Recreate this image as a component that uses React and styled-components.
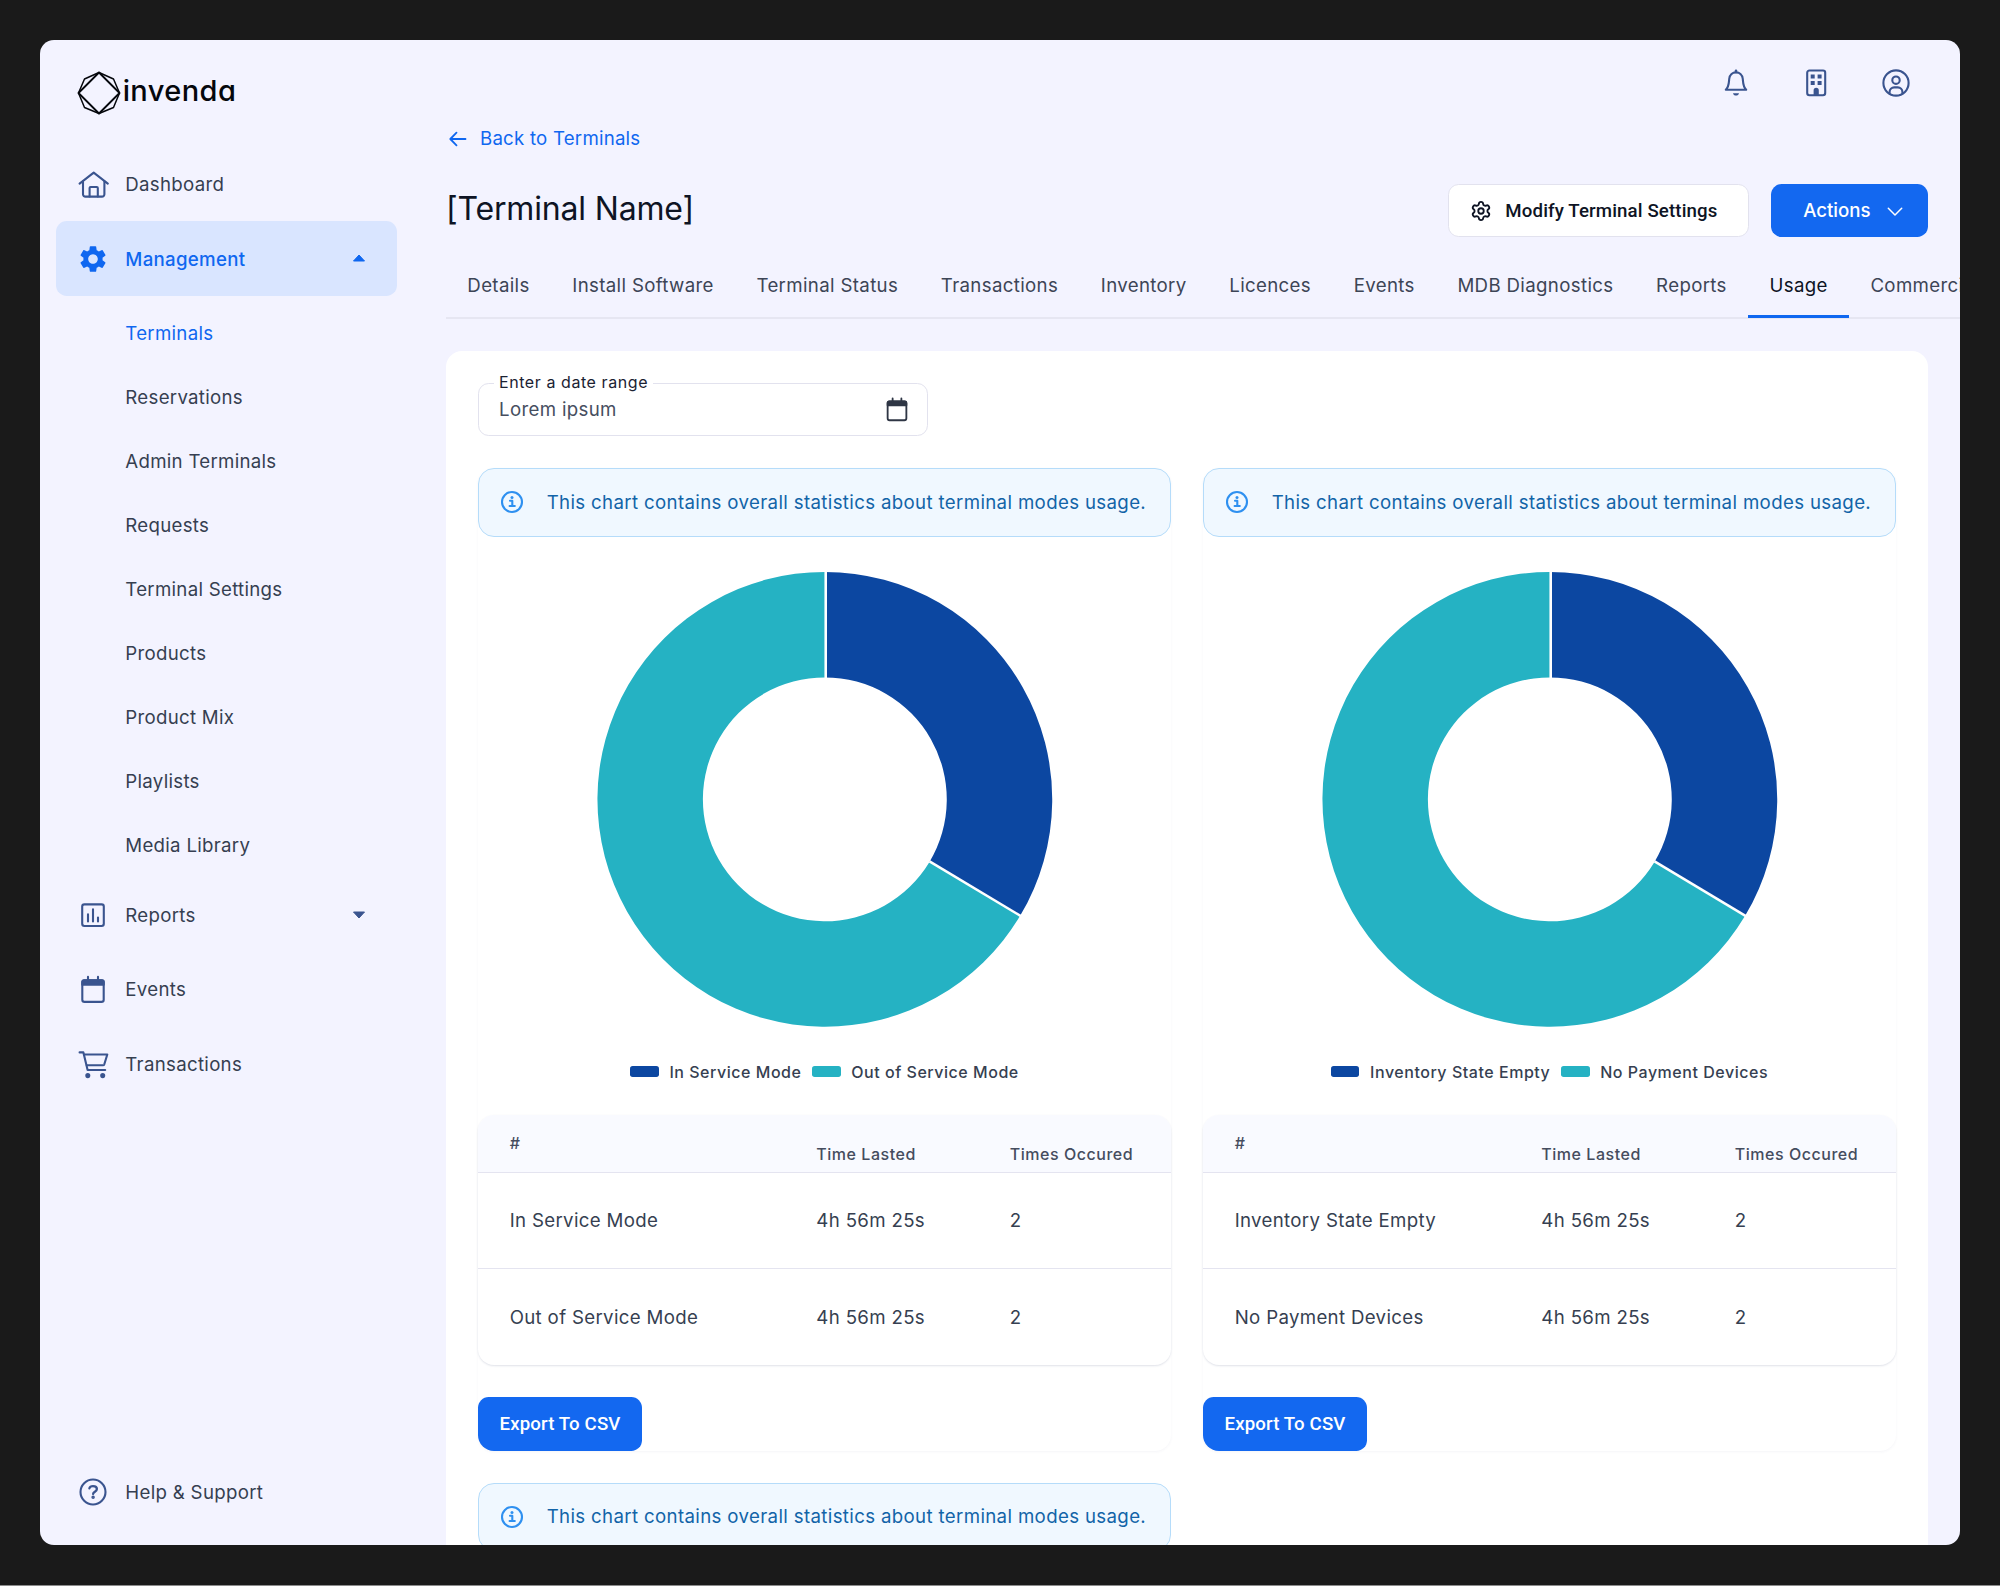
import styled, { createGlobalStyle, css } from "styled-components";
import { MdSettings } from "react-icons/md";
import { Settings } from "lucide-react";

const GlobalStyle = createGlobalStyle`
  * {
    box-sizing: border-box;
  }
  body {
    margin: 0;
    background: #1a1a1a;
    font-family: Inter, "Liberation Sans", sans-serif;
    color: #363f51;
  }
  button {
    font-family: inherit;
  }
`;

const subItems = [
  "Terminals",
  "Reservations",
  "Admin Terminals",
  "Requests",
  "Terminal Settings",
  "Products",
  "Product Mix",
  "Playlists",
  "Media Library",
];

const tabs = [
  "Details",
  "Install Software",
  "Terminal Status",
  "Transactions",
  "Inventory",
  "Licences",
  "Events",
  "MDB Diagnostics",
  "Reports",
  "Usage",
  "Commercials",
];

const charts = [
  [
    { name: "In Service Mode", time: "4h 56m 25s", count: 2, share: 0.3358, color: "#0c47a1" },
    { name: "Out of Service Mode", time: "4h 56m 25s", count: 2, share: 0.6642, color: "#25b2c3" },
  ],
  [
    { name: "Inventory State Empty", time: "4h 56m 25s", count: 2, share: 0.3358, color: "#0c47a1" },
    { name: "No Payment Devices", time: "4h 56m 25s", count: 2, share: 0.6642, color: "#25b2c3" },
  ],
];

/* Icons */

const HomeIcon = () => (
  <LineIcon viewBox="0 0 32 32">
    <path d="M2.6 15.6 16.7 4.6 30.8 15.6" />
    <path d="M6 13.4V26.2a2.4 2.4 0 0 0 2.4 2.4H25a2.4 2.4 0 0 0 2.4-2.4V13.4" />
    <path d="M12.6 28.4V20a1 1 0 0 1 1-1h6.2a1 1 0 0 1 1 1v8.4" />
  </LineIcon>
);

const ReportsIcon = () => (
  <LineIcon viewBox="0 0 32 32">
    <rect x="5.2" y="5.4" width="21.6" height="21.6" rx="2.2" />
    <path d="M11 15.4V22.4M16 10.4V22.4M21 18.6V22.4" />
  </LineIcon>
);

const CalendarIcon = ({ size, color }) => (
  <LineIcon viewBox="0 0 32 32" $size={size} $color={color}>
    <rect x="5.3" y="7.3" width="21.4" height="21.6" rx="2.2" />
    <path d="M5.3 9A1.7 1.7 0 0 1 7 7.3h18A1.7 1.7 0 0 1 26.7 9v2.8H5.3z" fill="currentColor" />
    <path d="M11 3.9V8M21 3.9V8" />
  </LineIcon>
);

const CartIcon = () => (
  <LineIcon viewBox="0 0 32 32">
    <path d="M2.6 4.4H6.4L10.6 22H28.2" />
    <path d="M7 6.5H30.3L27.3 16.3a1.6 1.6 0 0 1-1.4 1H9.8" />
    <circle cx="10.8" cy="27.6" r="1.5" fill="currentColor" />
    <circle cx="25.7" cy="27.6" r="1.5" fill="currentColor" />
  </LineIcon>
);

const HelpIcon = () => (
  <LineIcon viewBox="0 0 32 32">
    <circle cx="16" cy="16" r="12.5" />
    <path d="M12.4 12.3C12.8 10.9 14.2 10.1 16 10.1c2.3 0 3.9 1.2 3.9 3 0 2.6-3.8 2.6-3.8 4.9" strokeWidth="2.3" />
    <circle cx="16.1" cy="21.3" r="0.7" fill="currentColor" />
  </LineIcon>
);

const BellIcon = () => (
  <LineIcon viewBox="0 0 32 32">
    <path d="M5.8 22.8C9 19.8 8.800 16.5 9.2 12 9.6 7.6 12.7 5.400 16 5.400s6.4 2.2 6.8 6.6c.4 4.5.2 7.8 3.400 10.8z" />
    <path d="M16 3.8V5" strokeWidth="2.6" />
    <path d="M13 26.2h6c-.4 3.2-5.6 3.2-6 0z" fill="currentColor" stroke="none" />
  </LineIcon>
);

const BuildingIcon = () => (
  <LineIcon viewBox="0 0 32 32">
    <rect x="7.2" y="3.5" width="18" height="24.8" rx="2.2" />
    <path
      d="M10.700 7.400h4v4h-4zM17.600 7.400h4v4h-4zM10.700 14h4v4h-4zM17.600 14h4v4h-4zM13.600 28v-4.600a2.600 2.600 0 0 1 5.200 0V28z"
      fill="currentColor"
      stroke="none"
    />
  </LineIcon>
);

const UserIcon = () => (
  <LineIcon viewBox="0 0 32 32">
    <circle cx="16" cy="16" r="12.6" />
    <circle cx="16" cy="13.2" r="3.7" />
    <path d="M9.6 26.2V25a4.6 4.6 0 0 1 4.6-4.6h3.6a4.6 4.6 0 0 1 4.6 4.6v1.2" />
  </LineIcon>
);

const InfoIcon = () => (
  <LineIcon viewBox="0 0 32 32" $color="#2e90f0">
    <circle cx="16" cy="16" r="10" />
    <path d="M14 14.8h2.3v5M13.6 20h5.2" />
    <circle cx="16" cy="11.4" r="1.5" fill="currentColor" stroke="none" />
  </LineIcon>
);

const Caret = ({ up }) => (
  <CaretSvg viewBox="0 0 14 8">
    {up ? <path d="M1.5 7 7 1l5.500 6z" /> : <path d="M1.500 1 7 7l5.500-6z" />}
  </CaretSvg>
);

const Logo = () => (
  <LogoWrap>
    <LogoMark viewBox="0 0 44 44">
      <path d="M22 1.5 36.5 8 42.5 22 36.5 36.5 22 42.5 7.5 36.5 1.5 22 7.5 8z" strokeWidth="1.5" />
      <path d="M22 1.5 42.5 22 22 42.5 1.5 22z" strokeWidth="1.8" />
    </LogoMark>
    <LogoText>invenda</LogoText>
  </LogoWrap>
);

/* Donut chart */

const CX = 347;
const CY = 262.33;
const OUTER = 227.5;
const INNER = 122;

const point = (radius, turn) => {
  const angle = turn * Math.PI * 2;
  return `${CX + radius * Math.sin(angle)} ${CY - radius * Math.cos(angle)}`;
};

const slice = (from, to) => {
  const large = to - from > 0.5 ? 1 : 0;
  return `M${point(OUTER, from)}A${OUTER} ${OUTER} 0 ${large} 1 ${point(OUTER, to)}L${point(INNER, to)}A${INNER} ${INNER} 0 ${large} 0 ${point(INNER, from)}z`;
};

const Donut = ({ data }) => {
  let start = 0;
  const parts = data.map((item) => {
    const from = start;
    start += item.share;
    return { ...item, from, to: start };
  });

  return (
    <DonutSvg viewBox="0 0 693.33 524.67">
      {parts.map((part) => (
        <path key={part.name} d={slice(part.from, part.to)} fill={part.color} />
      ))}
      <g transform="translate(0.9 0)">
        {parts.map((part) => (
          <path key={part.name} d={`M${point(INNER - 1, part.from)}L${point(OUTER + 1, part.from)}`} stroke="#fff" strokeWidth="2.5" />
        ))}
      </g>
    </DonutSvg>
  );
};

const InfoBox = () => (
  <InfoBar>
    <InfoIcon />
    <InfoText>This chart contains overall statistics about terminal modes usage.</InfoText>
  </InfoBar>
);

const ChartCard = ({ data }) => (
  <Card>
    <InfoBox />
    <Donut data={data} />
    <Legend>
      {data.map((item) => (
        <LegendItem key={item.name}>
          <Swatch $color={item.color} />
          {item.name}
        </LegendItem>
      ))}
    </Legend>
    <Table>
      <HeadRow>
        <HashCell>#</HashCell>
        <span>Time Lasted</span>
        <span>Times Occured</span>
      </HeadRow>
      {data.map((item) => (
        <Row key={item.name}>
          <span>{item.name}</span>
          <span>{item.time}</span>
          <span>{item.count}</span>
        </Row>
      ))}
    </Table>
    <ExportButton>Export To CSV</ExportButton>
  </Card>
);

const App = () => {
  return (
    <Page>
      <GlobalStyle />
      <Window>
        <Sidebar>
          <Logo />
          <NavItem>
            <HomeIcon />
            Dashboard
          </NavItem>
          <NavItem $active>
            <MdSettings size={32} />
            Management
            <Caret up />
          </NavItem>
          <SubNav>
            {subItems.map((item) => (
              <SubItem key={item} $active={item === "Terminals"}>
                {item}
              </SubItem>
            ))}
          </SubNav>
          <NavItem>
            <ReportsIcon />
            Reports
            <Caret />
          </NavItem>
          <NavItem>
            <CalendarIcon />
            Events
          </NavItem>
          <NavItem>
            <CartIcon />
            Transactions
          </NavItem>
          <Spacer />
          <NavItem>
            <HelpIcon />
            Help &amp; Support
          </NavItem>
        </Sidebar>

        <Main>
          <TopIcons>
            <BellIcon />
            <BuildingIcon />
            <UserIcon />
          </TopIcons>
          <BackLink>
            <ArrowSvg viewBox="0 0 18 16">
              <path d="M16.500 8H1.500M7.500 1.700 1.300 8l6.200 6.300" />
            </ArrowSvg>
            Back to Terminals
          </BackLink>
          <TitleRow>
            <Title>[Terminal Name]</Title>
            <SettingsButton>
              <Settings size={22} strokeWidth={2} />
              Modify Terminal Settings
            </SettingsButton>
            <ActionsButton>
              Actions
              <ChevronSvg viewBox="0 0 16 10">
                <path d="M1.300 1.300 8 8l6.700-6.700" />
              </ChevronSvg>
            </ActionsButton>
          </TitleRow>
          <Tabs>
            {tabs.map((tab) => (
              <Tab key={tab} $active={tab === "Usage"}>
                {tab}
              </Tab>
            ))}
          </Tabs>
          <Panel>
            <Field>
              <FieldLabel>Enter a date range</FieldLabel>
              <FieldValue>Lorem ipsum</FieldValue>
              <CalendarIcon size="28px" color="#2f3645" />
            </Field>
            <Grid>
              {charts.map((data) => (
                <ChartCard key={data[0].name} data={data} />
              ))}
              <InfoBox />
            </Grid>
          </Panel>
        </Main>
      </Window>
    </Page>
  );
};

export default App;

const Page = styled.div`
  height: 1586px;
  padding: 40px;
  background: #1a1a1a;
  border-bottom: 1px solid #8c8c8c;
`;

const Window = styled.div`
  display: flex;
  width: 1920px;
  height: 1505px;
  border-radius: 14px;
  background: #f3f3ff;
  overflow: hidden;
`;

const Sidebar = styled.nav`
  display: flex;
  flex-direction: column;
  flex-shrink: 0;
  width: 374px;
  padding: 30.67px 16.67px 15.67px 16px;
`;

const LogoWrap = styled.div`
  display: flex;
  height: 76px;
  padding-left: 20.67px;
`;

const LogoMark = styled.svg`
  width: 44px;
  height: 44px;
  fill: none;
  stroke: #05070c;
  stroke-linejoin: round;
`;

const LogoText = styled.span`
  margin-left: 2px;
  font-size: 29px;
  font-weight: 500;
  line-height: 40px;
  letter-spacing: 0.4px;
  font-feature-settings: "cv11";
  color: #05070c;
`;

const LineIcon = styled.svg`
  flex-shrink: 0;
  width: ${(props) => props.$size || "32px"};
  height: ${(props) => props.$size || "32px"};
  color: ${(props) => props.$color || "#3a548f"};
  fill: none;
  stroke: currentColor;
  stroke-width: 2.1;
  stroke-linecap: round;
  stroke-linejoin: round;
`;

const CaretSvg = styled.svg`
  flex-shrink: 0;
  width: 14px;
  height: 8px;
  margin-left: auto;
  fill: currentColor;
  stroke: currentColor;
  stroke-width: 1;
  stroke-linejoin: round;
`;

const NavItem = styled.div`
  display: flex;
  align-items: center;
  gap: 16px;
  flex-shrink: 0;
  height: 74.67px;
  padding: 1px 31px 0 21.33px;
  border-radius: 10.67px;
  font-size: 18.67px;
  letter-spacing: 0.3px;

  ${LineIcon} {
    margin-top: -1px;
  }

  ${CaretSvg} {
    color: #3a548f;
  }

  ${(props) =>
    props.$active &&
    css`
      background: #d9e5ff;
      color: #0f67f0;
      font-weight: 500;

      ${CaretSvg} {
        margin-top: -2px;
        color: #0f67f0;
      }
    `}
`;

const SubNav = styled.div`
  padding: 5.33px 0 0 69.33px;
`;

const SubItem = styled.div`
  height: 64px;
  font-size: 18.67px;
  line-height: 66px;
  letter-spacing: 0.28px;
  color: ${(props) => (props.$active ? "#0f67f0" : "#363f51")};
`;

const Spacer = styled.div`
  flex: 1;
`;

const Main = styled.main`
  display: flex;
  flex-direction: column;
  flex: 1;
  min-width: 0;
  padding: 27.33px 32px 0;
`;

const TopIcons = styled.div`
  display: flex;
  justify-content: flex-end;
  gap: 48px;
  flex-shrink: 0;
  padding-right: 16px;
`;

const BackLink = styled.a`
  display: flex;
  align-items: center;
  gap: 13px;
  flex-shrink: 0;
  height: 26.67px;
  margin: 26px 0 32px 3px;
  font-size: 18.67px;
  letter-spacing: 0.22px;
  color: #0f67f0;
`;

const ArrowSvg = styled.svg`
  width: 18px;
  height: 16px;
  fill: none;
  stroke: currentColor;
  stroke-width: 1.8;
  stroke-linecap: round;
  stroke-linejoin: round;
`;

const TitleRow = styled.div`
  display: flex;
  flex-shrink: 0;
  margin-bottom: 16px;
`;

const Title = styled.h1`
  margin: 0 auto 0 0;
  font-size: 32px;
  font-weight: 400;
  line-height: 49px;
  letter-spacing: -0.17px;
  color: #0e1424;
`;

const Button = styled.button`
  display: flex;
  align-items: center;
  flex-shrink: 0;
  height: 53.33px;
  border: none;
  border-radius: 10.67px;
  background: #1368f0;
  color: #fff;
  font-size: 18.67px;
  font-weight: 500;
`;

const SettingsButton = styled(Button)`
  gap: 13px;
  width: 301px;
  margin-right: 21.33px;
  padding: 0 0 0 21px;
  border: 1.33px solid #e2e2ee;
  background: #fff;
  color: #0e1424;
  font-family: Roboto, sans-serif;
  letter-spacing: 0.13px;
`;

const ActionsButton = styled(Button)`
  gap: 16px;
  width: 157.33px;
  padding-left: 32.5px;
`;

const ChevronSvg = styled.svg`
  width: 16px;
  height: 10px;
  margin-top: 3px;
  fill: none;
  stroke: currentColor;
  stroke-width: 1.5;
  stroke-linecap: round;
  stroke-linejoin: round;
`;

const ExportButton = styled(Button)`
  justify-content: center;
  width: 164px;
  padding: 0;
  margin-top: 32px;
  border-bottom-left-radius: 16px;
  font-family: Roboto, sans-serif;
  letter-spacing: 0.13px;
`;

const Tabs = styled.div`
  display: flex;
  flex-shrink: 0;
  height: 65.33px;
  margin-right: -32px;
  border-bottom: 2px solid #e6e6f2;
`;

const Tab = styled.div`
  flex-shrink: 0;
  height: 64.33px;
  padding: 0 21.33px;
  font-size: 18.67px;
  line-height: 66.33px;
  letter-spacing: 0.345px;
  color: #3d4556;

  ${(props) =>
    props.$active &&
    css`
      color: #0e1424;
      border-bottom: 3px solid #0f67f0;
    `}
`;

const Panel = styled.section`
  flex: 1;
  min-height: 0;
  margin-top: 32px;
  padding: 32px 32px 0;
  border-radius: 16px 16px 0 0;
  background: #fff;
`;

const Field = styled.div`
  position: relative;
  display: flex;
  align-items: center;
  justify-content: space-between;
  width: 450px;
  height: 53.33px;
  padding: 0 16.5px 0 20px;
  border: 1.33px solid #e2e2ee;
  border-radius: 10.67px;
`;

/* Floating label that sits over the top border */
const FieldLabel = styled.label`
  position: absolute;
  top: -14px;
  left: 15px;
  padding: 0 5px;
  background: #fff;
  font-size: 16px;
  line-height: 24px;
  letter-spacing: 0.57px;
  color: #1b2233;
`;

const FieldValue = styled.span`
  font-size: 18.67px;
  letter-spacing: 0.33px;
  color: #464e60;
`;

const Grid = styled.div`
  display: grid;
  grid-template-columns: 1fr 1fr;
  align-items: start;
  gap: 32px;
  margin-top: 32px;
`;

const Card = styled.article`
  border-radius: 16px;
  box-shadow: 0 1px 3px rgba(60, 60, 120, 0.05);
`;

const InfoBar = styled.div`
  display: flex;
  align-items: center;
  gap: 18.67px;
  height: 68.67px;
  padding-left: 17px;
  border: 1.5px solid #b5dcfa;
  border-radius: 16px;
  background: #f0f8ff;
`;

const InfoText = styled.span`
  font-size: 18.67px;
  letter-spacing: 0.35px;
  white-space: nowrap;
  color: #1264a8;
`;

const DonutSvg = styled.svg`
  display: block;
  width: 100%;
  height: 524.67px;
`;

const Legend = styled.div`
  display: flex;
  justify-content: center;
  gap: 10.67px;
  height: 20.67px;
  margin-bottom: 32.67px;
`;

const LegendItem = styled.div`
  display: flex;
  align-items: center;
  gap: 10.67px;
  font-size: 16px;
  font-weight: 500;
  letter-spacing: 0.53px;
`;

const Swatch = styled.span`
  width: 28.5px;
  height: 10.67px;
  border-radius: 2.67px;
  background: ${(props) => props.$color};
`;

const Table = styled.div`
  border-radius: 16px;
  overflow: hidden;
  box-shadow: 0 1px 2px rgba(50, 60, 110, 0.15);
`;

const Row = styled.div`
  display: grid;
  grid-template-columns: 306.67px 193.5px 1fr;
  align-items: center;
  height: 96px;
  padding-left: 31.67px;
  font-size: 18.67px;
  letter-spacing: 0.33px;

  &:not(:last-child) {
    border-bottom: 1.33px solid #e4e4f0;
  }
`;

const HeadRow = styled(Row)`
  align-items: end;
  height: 58.67px;
  padding-bottom: 6.5px;
  background: #f9faff;
  font-size: 16px;
  font-weight: 500;
  line-height: 24px;
  letter-spacing: 0.53px;
  color: #454c5e;
`;

const HashCell = styled.span`
  align-self: start;
  margin-top: 16px;
`;
